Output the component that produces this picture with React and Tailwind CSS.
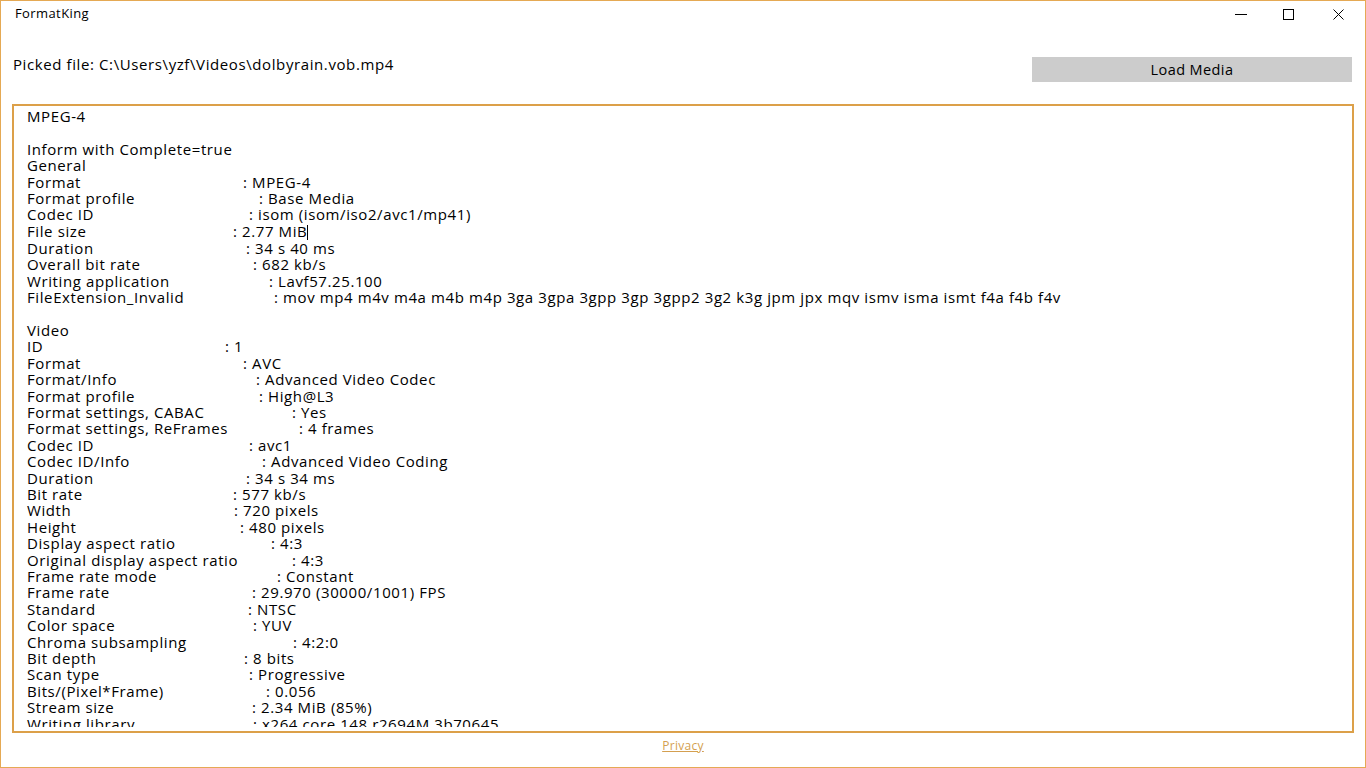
import React from "react";

const general = [
  ["Format", 243, "MPEG-4"],
  ["Format profile", 259, "Base Media"],
  ["Codec ID", 249, "isom (isom/iso2/avc1/mp41)"],
  ["File size", 233, "2.77 MiB", true],
  ["Duration", 246, "34 s 40 ms"],
  ["Overall bit rate", 253, "682 kb/s"],
  ["Writing application", 269, "Lavf57.25.100"],
  ["FileExtension_Invalid", 274, "mov mp4 m4v m4a m4b m4p 3ga 3gpa 3gpp 3gp 3gpp2 3g2 k3g jpm jpx mqv ismv isma ismt f4a f4b f4v"],
];

const video = [
  ["ID", 225, "1"],
  ["Format", 243, "AVC"],
  ["Format/Info", 256, "Advanced Video Codec"],
  ["Format profile", 259, "High@L3"],
  ["Format settings, CABAC", 292, "Yes"],
  ["Format settings, ReFrames", 299, "4 frames"],
  ["Codec ID", 249, "avc1"],
  ["Codec ID/Info", 262, "Advanced Video Coding"],
  ["Duration", 246, "34 s 34 ms"],
  ["Bit rate", 233, "577 kb/s"],
  ["Width", 234, "720 pixels"],
  ["Height", 240, "480 pixels"],
  ["Display aspect ratio", 271, "4:3"],
  ["Original display aspect ratio", 292, "4:3"],
  ["Frame rate mode", 277, "Constant"],
  ["Frame rate", 252, "29.970 (30000/1001) FPS"],
  ["Standard", 248, "NTSC"],
  ["Color space", 253, "YUV"],
  ["Chroma subsampling", 293, "4:2:0"],
  ["Bit depth", 244, "8 bits"],
  ["Scan type", 249, "Progressive"],
  ["Bits/(Pixel*Frame)", 266, "0.056"],
  ["Stream size", 252, "2.34 MiB (85%)"],
  ["Writing library", 253, "x264 core 148 r2694M 3b70645"],
];

function Row({ row }) {
  const [label, colon, value, caret] = row;
  return (
    <div className="whitespace-pre">
      <span className="inline-block" style={{ width: colon - 27 }}>{label}</span>
      <span>: {value}</span>
      {caret && <span className="inline-block w-px h-[15px] bg-black align-[-3px]" />}
    </div>
  );
}

export default function App() {
  return (
    <div
      className="w-[1366px] h-[768px] bg-white border border-[#e5a954] flex flex-col text-black overflow-hidden"
      style={{ fontFamily: '"Open Sans", "Noto Sans", sans-serif' }}
    >
      <div className="h-[27px] flex items-start shrink-0">
        <div className="pl-[14px] pt-[3px] text-[13px] tracking-[0.4px] flex-1">FormatKing</div>
        <div className="flex h-[27px]">
          <div className="w-[46px] flex items-center justify-center">
            <svg width="12" height="11" viewBox="0 0 12 11"><path d="M0 5.5H12" stroke="#000" strokeWidth="1" /></svg>
          </div>
          <div className="w-[48px] flex items-center justify-center">
            <svg width="11" height="11" viewBox="0 0 11 11"><rect x="0.5" y="0.5" width="10" height="10" fill="none" stroke="#000" strokeWidth="1" /></svg>
          </div>
          <div className="w-[53px] flex items-center justify-center">
            <svg width="11" height="11" viewBox="0 0 11 11"><path d="M0.5 0.5L10.5 10.5M10.5 0.5L0.5 10.5" stroke="#000" strokeWidth="1" /></svg>
          </div>
        </div>
      </div>
      <div className="flex items-start justify-between pl-[12px] pr-[13px] pt-[27px] h-[76px] shrink-0">
        <div className="text-[15px] tracking-[0.6px] leading-[18px]">Picked file: C:\Users\yzf\Videos\dolbyrain.vob.mp4</div>
        <div className="w-[320px] h-[25px] bg-[#cccccc] flex items-center justify-center text-[14.5px] tracking-[0.4px] mt-[2px]">Load Media</div>
      </div>
      <div className="mx-[11px] h-[629px] border-2 border-[#dca049] pb-[4px]">
        <div className="h-full overflow-hidden pl-[13px] pt-[2px] text-[15px] tracking-[0.6px] leading-[16.4px]">
          <div>MPEG-4</div>
          <div>&nbsp;</div>
          <div>Inform with Complete=true</div>
          <div>General</div>
          {general.map((r, i) => <Row key={"g" + i} row={r} />)}
          <div>&nbsp;</div>
          <div>Video</div>
          {video.map((r, i) => <Row key={"v" + i} row={r} />)}
        </div>
      </div>
      <div className="flex-1 flex items-start justify-center pt-[4px]">
        <span className="text-[12px] tracking-[0.3px] text-[#d49f50] underline">Privacy</span>
      </div>
    </div>
  );
}
